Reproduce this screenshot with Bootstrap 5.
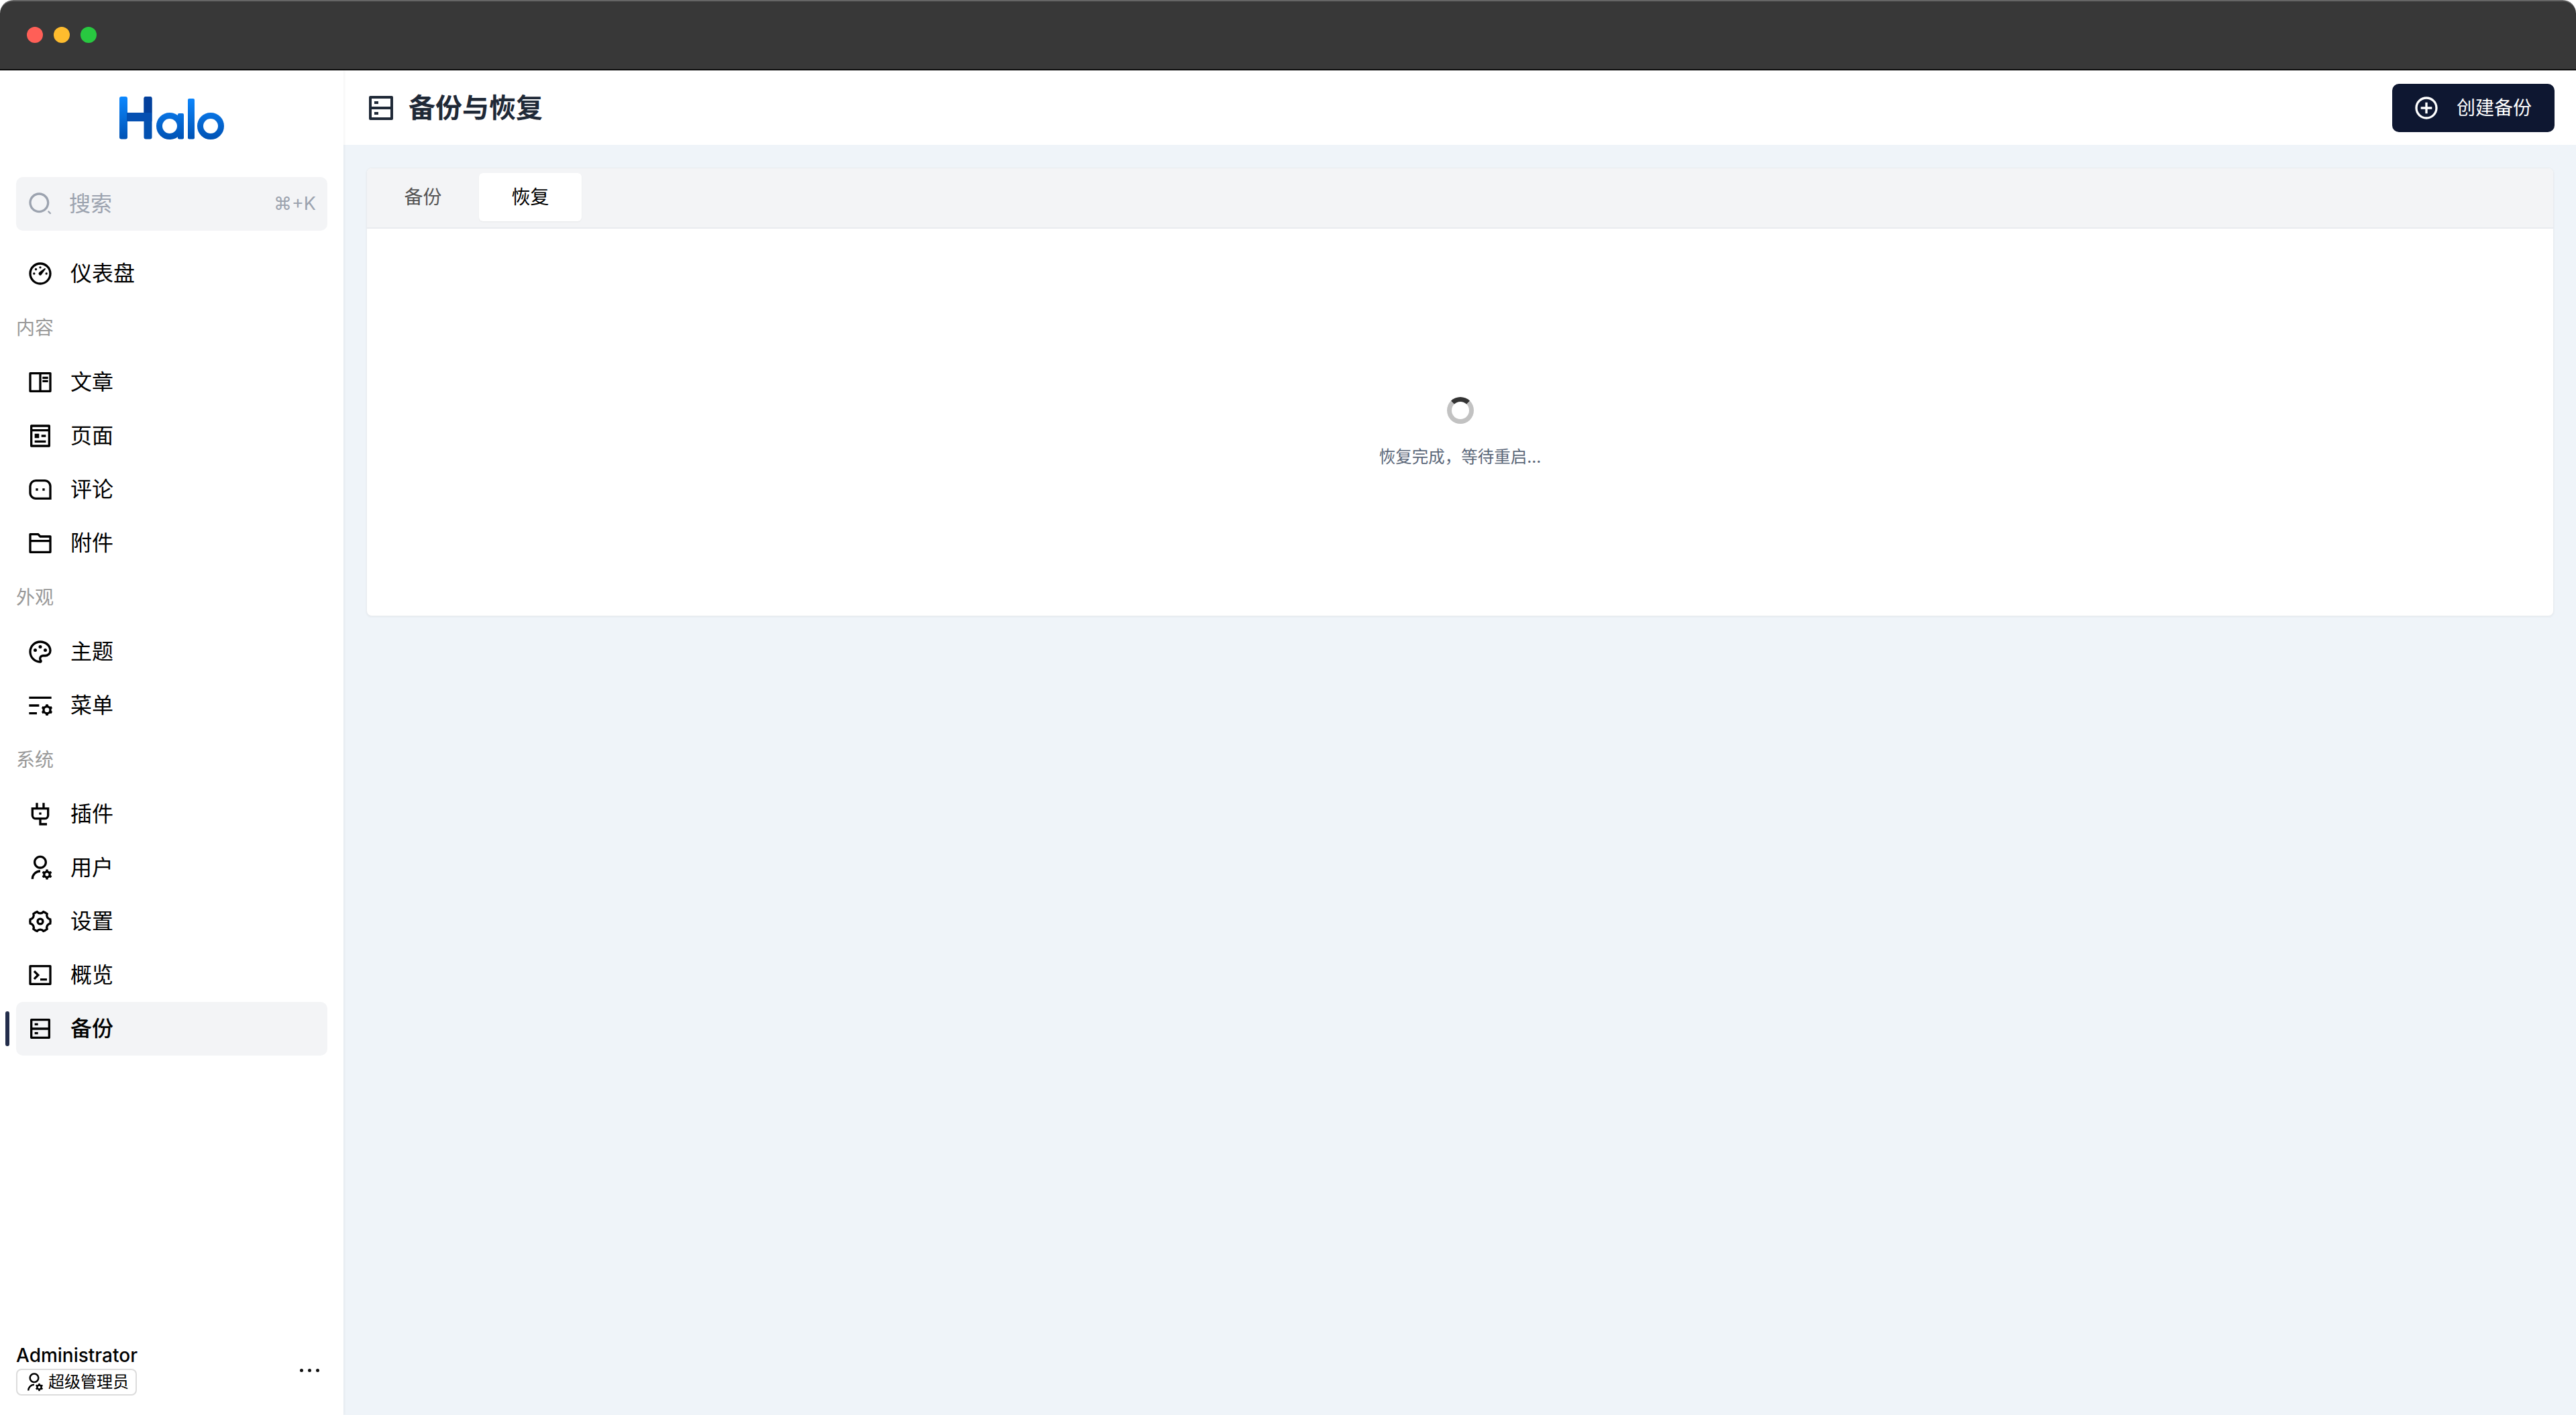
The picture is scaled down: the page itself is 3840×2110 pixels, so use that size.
<!DOCTYPE html>
<html lang="zh-CN">
<head>
<meta charset="utf-8">
<title>备份与恢复</title>
<link href="https://cdn.jsdelivr.net/npm/bootstrap@5.3.0/dist/css/bootstrap.min.css" rel="stylesheet">
<style>
html, body { height: 100%; }
body { font-family: "Inter", "Noto Sans CJK SC", sans-serif; background: #fff; color: #000; overflow: hidden; }
.hl-window { height: 100vh; }
.hl-titlebar { flex: 0 0 105px; background: #383838; border-top: 2px solid #666; border-bottom: 2px solid #0c0c0c; border-radius: 20px 20px 0 0; padding-left: 40px; gap: 16px; }
.hl-light { width: 24px; height: 24px; border-radius: 50%; margin-top: -2px; }
.hl-red { background: #ff5f57; }
.hl-yellow { background: #febc2e; }
.hl-green { background: #28c840; }
.hl-sidebar { flex: 0 0 512px; width: 512px; background: #fff; box-shadow: 1px 0 4px rgba(0,0,0,.06); z-index: 2; }
.hl-logo { padding-top: 37px; margin-bottom: 54px; line-height: 0; }
.hl-search { margin: 0 24px 24px; height: 80px; background: #f3f4f6; border-radius: 10px; padding: 0 17px 0 16px; color: #9ca3af; gap: 23px; }
.hl-search-text { font-size: 32px; }
.hl-kbd { font-size: 27px; font-family: "Inter", "DejaVu Sans", sans-serif; }
.hl-ico { width: 40px; height: 40px; flex: 0 0 40px; fill: currentColor; }
.hl-item { height: 80px; margin: 0 24px; padding: 0 16px; gap: 25px; border-radius: 10px; color: #000; font-size: 32px; text-decoration: none; position: relative; }
.hl-item:hover { color: #000; }
.hl-item-active { background: #f3f4f6; font-weight: 500; }
.hl-item-active::before { content: ""; position: absolute; left: -16px; top: 14px; width: 6px; height: 52px; border-radius: 3px; background: #232d4b; }
.hl-label { height: 82px; padding-left: 24px; font-size: 28px; color: #999; }
.hl-user { padding: 0 36px 28px 24px; }
.hl-name { font-size: 28px; font-weight: 500; line-height: 34px; margin-bottom: 3px; }
.hl-role { display: inline-flex; align-items: center; height: 40px; border: 2px solid #dcdcdc; border-radius: 8px; padding: 0 10px 0 10px; font-size: 24px; gap: 6px; line-height: 1; }
.hl-role .hl-ico { width: 30px; height: 30px; flex: 0 0 30px; }
.hl-dots { gap: 7px; margin-top: 0; }
.hl-dot { width: 5px; height: 5px; border-radius: 50%; background: #111; }
.hl-main { background: #eff4f9; min-width: 0; }
.hl-header { flex: 0 0 111px; background: #fff; padding: 0 32px; }
.hl-title { font-size: 40px; font-weight: 700; color: #1f2937; gap: 17px; margin: 0; line-height: 1; }
.hl-title .hl-ico { width: 48px; height: 48px; flex: 0 0 48px; }
.hl-create { height: 72px; width: 242px; background: #0e1731; border: 0; border-radius: 10px; color: #fff; font-size: 28px; gap: 25px; padding: 0 33px 0 31px; }
.hl-create:hover, .hl-create:active { background: #0e1731 !important; color: #fff !important; }
.hl-body { padding: 34px 33px 34px 34px; }
.hl-panel { height: 669px; border: 1px solid #e9ecf0; border-radius: 8px; box-shadow: 0 1px 3px rgba(0,0,0,.05); overflow: hidden; background: #fff; }
.hl-tabs { height: 90px; background: #f3f4f6; border-bottom: 2px solid #e9ebef; padding: 7px 7px; gap: 7px; }
.hl-tab { height: 72px; width: 153px; font-size: 28px; color: #555; border-radius: 6px; text-decoration: none; }
.hl-tab:hover { color: #555; }
.hl-tab-active, .hl-tab-active:hover { background: #fff; color: #000; box-shadow: 0 1px 2px rgba(0,0,0,.05); }
.hl-pane { flex: 1 1 auto; padding-top: 251px; }
.hl-loader { width: 40px; height: 40px; border: 7px solid #c2c2c2; border-top-color: #333; border-radius: 50%; }
.hl-wait { font-size: 24.5px; color: #5b6779; margin-top: 31px; line-height: 36px; }
</style>
</head>
<body>
<svg width="0" height="0" class="d-none" aria-hidden="true">
  <symbol id="i-dash" viewBox="0 0 24 24"><path d="M12 2c5.523 0 10 4.477 10 10s-4.477 10-10 10S2 17.523 2 12 6.477 2 12 2zm0 2a8 8 0 1 0 0 16 8 8 0 0 0 0-16zm3.833 3.337a.596.596 0 0 1 .763.067.59.59 0 0 1 .063.76c-2.18 3.046-3.38 4.678-3.598 4.897a1.5 1.5 0 0 1-2.122-2.122c.374-.373 2.005-1.574 4.894-3.602zM17.5 11a1 1 0 0 1 0 2 1 1 0 0 1 0-2zm-11 0a1 1 0 0 1 0 2 1 1 0 0 1 0-2zm2.318-3.596a1 1 0 0 1 0 1.414 1 1 0 0 1-1.414 0 1 1 0 0 1 0-1.414 1 1 0 0 1 1.414 0zM12 5.5a1 1 0 0 1 1 1 1 1 0 0 1-2 0 1 1 0 0 1 1-1z"/></symbol>
  <symbol id="i-book" viewBox="0 0 24 24"><path d="M2 3.993A1 1 0 0 1 2.992 3h18.016c.548 0 .992.445.992.993v16.014a1 1 0 0 1-.992.993H2.992A.993.993 0 0 1 2 20.007V3.993zM11 5H4v14h7V5zm2 0v14h7V5h-7zm1 2h5v2h-5V7zm0 3h5v2h-5v-2z"/></symbol>
  <symbol id="i-pages" viewBox="0 0 24 24"><path d="M5 8v12h14V8H5zm0-2h14V4H5v2zm15 16H4a1 1 0 0 1-1-1V3a1 1 0 0 1 1-1h16a1 1 0 0 1 1 1v18a1 1 0 0 1-1 1zM7 10h4v4H7v-4zm0 6h10v2H7v-2zm6-5h4v2h-4v-2z"/></symbol>
  <symbol id="i-msg" viewBox="0 0 24 24"><path d="M2 8.994A5.99 5.99 0 0 1 8 3h8c3.313 0 6 2.695 6 5.994V21H8c-3.313 0-6-2.695-6-5.994V8.994zM20 19V8.994A4.004 4.004 0 0 0 16 5H8a3.99 3.99 0 0 0-4 3.994v6.012A4.004 4.004 0 0 0 8 19h12zm-6-8h2v2h-2v-2zm-6 0h2v2H8v-2z"/></symbol>
  <symbol id="i-folder" viewBox="0 0 24 24"><path d="M12.414 5H21a1 1 0 0 1 1 1v14a1 1 0 0 1-1 1H3a1 1 0 0 1-1-1V4a1 1 0 0 1 1-1h7.414l2 2zM20 11H4v8h16v-8zm0-2V7h-8.414l-2-2H4v4h16z"/></symbol>
  <symbol id="i-palette" viewBox="0 0 24 24"><path d="M12 2c5.522 0 10 3.978 10 8.889a5.558 5.558 0 0 1-5.556 5.555h-1.966c-.922 0-1.667.745-1.667 1.667 0 .422.167.811.422 1.1.267.3.434.689.434 1.122C13.667 21.256 12.9 22 12 22 6.478 22 2 17.522 2 12S6.478 2 12 2zm-1.189 16.111a3.664 3.664 0 0 1 3.667-3.667h1.966A3.558 3.558 0 0 0 20 10.89C20 7.139 16.468 4 12 4a8 8 0 0 0-.676 15.972 3.648 3.648 0 0 1-.513-1.86zM7.5 12a1.5 1.5 0 1 1 0-3 1.5 1.5 0 0 1 0 3zm9 0a1.5 1.5 0 1 1 0-3 1.5 1.5 0 0 1 0 3zM12 9a1.5 1.5 0 1 1 0-3 1.5 1.5 0 0 1 0 3z"/></symbol>
  <symbol id="i-list" viewBox="0 0 24 24"><path d="M2 18h7v2H2v-2zm0-7h9v2H2v-2zm0-7h20v2H2V4zm18.674 9.025l1.156-.391 1 1.732-.916.805a4.017 4.017 0 0 1 0 1.658l.916.805-1 1.732-1.156-.391c-.41.37-.898.655-1.435.83L19 21h-2l-.24-1.196a3.996 3.996 0 0 1-1.434-.83l-1.156.392-1-1.732.916-.805a4.017 4.017 0 0 1 0-1.658l-.916-.805 1-1.732 1.156.391c.41-.37.898-.655 1.435-.83L17 11h2l.24 1.196c.536.174 1.024.46 1.434.83zM18 18a2 2 0 1 0 0-4 2 2 0 0 0 0 4z"/></symbol>
  <symbol id="i-plug" viewBox="0 0 24 24"><path d="M4 6h4V2h2v4h4V2h2v4h4v7a4 4 0 0 1-4 4h-3v3h5v2h-7v-5H8a4 4 0 0 1-4-4zM6 8v5a2 2 0 0 0 2 2h8a2 2 0 0 0 2-2V8zM11 10.5h2v2h-2z"/></symbol>
  <symbol id="i-user" viewBox="0 0 24 24"><path d="M12 14v2a6 6 0 0 0-6 6H4a8 8 0 0 1 8-8zm0-1c-3.315 0-6-2.685-6-6s2.685-6 6-6 6 2.685 6 6-2.685 6-6 6zm0-2c2.21 0 4-1.79 4-4s-1.79-4-4-4-4 1.79-4 4 1.79 4 4 4zm2.595 7.812a3.51 3.51 0 0 1 0-1.623l-.992-.573 1-1.732.992.573A3.496 3.496 0 0 1 17 14.645V13.5h2v1.145c.532.158 1.012.44 1.405.812l.992-.573 1 1.732-.992.573a3.51 3.51 0 0 1 0 1.622l.992.573-1 1.732-.992-.573a3.496 3.496 0 0 1-1.405.812V22.5h-2v-1.145a3.496 3.496 0 0 1-1.405-.812l-.992.573-1-1.732.992-.572zM18 19.5a1.5 1.5 0 1 0 0-3 1.5 1.5 0 0 0 0 3z"/></symbol>
  <symbol id="i-gear" viewBox="0 0 24 24"><g transform="translate(12 12) scale(.91) translate(-12 -12)" fill="none" stroke="currentColor" stroke-width="2.2"><path d="M5.334 4.545a9.99 9.99 0 0 1 3.542-2.048A3.993 3.993 0 0 0 12 3.999a3.993 3.993 0 0 0 3.124-1.502 9.99 9.99 0 0 1 3.542 2.048 3.993 3.993 0 0 0 .262 3.454 3.993 3.993 0 0 0 2.863 1.955 10.043 10.043 0 0 1 0 4.09c-1.16.178-2.23.86-2.863 1.955a3.993 3.993 0 0 0-.262 3.455 9.99 9.99 0 0 1-3.542 2.047A3.993 3.993 0 0 0 12 20a3.993 3.993 0 0 0-3.124 1.502 9.99 9.99 0 0 1-3.542-2.047 3.993 3.993 0 0 0-.262-3.455 3.993 3.993 0 0 0-2.863-1.954 10.043 10.043 0 0 1 0-4.091 3.993 3.993 0 0 0 2.863-1.955 3.993 3.993 0 0 0 .262-3.454z"/><circle cx="12" cy="12" r="2.6"/></g></symbol>
  <symbol id="i-term" viewBox="0 0 24 24"><path d="M3 3h18a1 1 0 0 1 1 1v16a1 1 0 0 1-1 1H3a1 1 0 0 1-1-1V4a1 1 0 0 1 1-1zm1 2v14h16V5H4zm8 10h6v2h-6v-2zm-3.333-3L5.838 9.172l1.415-1.415L11.495 12l-4.242 4.243-1.415-1.415L8.667 12z"/></symbol>
  <symbol id="i-server" viewBox="0 0 24 24"><path d="M5 11h14V5H5v6zm16-7v16a1 1 0 0 1-1 1H4a1 1 0 0 1-1-1V4a1 1 0 0 1 1-1h16a1 1 0 0 1 1 1zm-2 9H5v6h14v-6zM7 15h3v2H7v-2zm0-8h3v2H7V7z"/></symbol>
  <symbol id="i-add" viewBox="0 0 24 24"><path d="M11 11V7h2v4h4v2h-4v4h-2v-4H7v-2h4zm1 11C6.477 22 2 17.523 2 12S6.477 2 12 2s10 4.477 10 10-4.477 10-10 10zm0-2a8 8 0 1 0 0-16 8 8 0 0 0 0 16z"/></symbol>
  <symbol id="i-search" viewBox="0 0 24 24"><path d="M11 2c4.968 0 9 4.032 9 9s-4.032 9-9 9-9-4.032-9-9 4.032-9 9-9zm0 16c3.867 0 7-3.133 7-7 0-3.868-3.133-7-7-7-3.868 0-7 3.132-7 7 0 3.867 3.132 7 7 7zm8.485.071l2.329 2.328-.915.915-2.328-2.329.914-.914z"/></symbol>
</svg>

<div class="hl-window d-flex flex-column">
  <div class="hl-titlebar d-flex align-items-center">
    <span class="hl-light hl-red"></span>
    <span class="hl-light hl-yellow"></span>
    <span class="hl-light hl-green"></span>
  </div>
  <div class="d-flex flex-grow-1" style="min-height:0">
    <aside class="hl-sidebar d-flex flex-column">
      <div class="hl-logo d-flex justify-content-center">
        <svg width="160" height="68" viewBox="176 142 160 68" role="img" aria-label="Halo">
          <defs>
            <linearGradient id="lg" gradientUnits="userSpaceOnUse" x1="0" y1="144" x2="0" y2="208"><stop offset="0" stop-color="#0d88ff"/><stop offset="1" stop-color="#0052b4"/></linearGradient>
          </defs>
          <rect x="178" y="144" width="12" height="63.5" rx="3" fill="url(#lg)"/>
          <rect x="214.5" y="144" width="12" height="63.5" rx="3" fill="#0351b0"/>
          <rect x="214.5" y="144" width="12" height="26" rx="3" fill="#03409c"/>
          <rect x="189" y="168" width="37.5" height="13" fill="#0550b2"/>
          <circle cx="253" cy="188" r="15.5" fill="none" stroke="url(#lg)" stroke-width="9"/>
          <rect x="265" y="169" width="9" height="38.5" rx="2" fill="url(#lg)"/>
          <rect x="280" y="147" width="10" height="60.5" rx="2" fill="url(#lg)"/>
          <circle cx="314" cy="188" r="15.5" fill="none" stroke="url(#lg)" stroke-width="9"/>
        </svg>
      </div>
      <div class="hl-search d-flex align-items-center">
        <svg class="hl-ico"><use href="#i-search"/></svg>
        <span class="hl-search-text flex-grow-1">搜索</span>
        <span class="hl-kbd">⌘+K</span>
      </div>
      <nav class="d-flex flex-column">
        <a class="hl-item d-flex align-items-center" href="#"><svg class="hl-ico"><use href="#i-dash"/></svg>仪表盘</a>
        <div class="hl-label d-flex align-items-center">内容</div>
        <a class="hl-item d-flex align-items-center" href="#"><svg class="hl-ico"><use href="#i-book"/></svg>文章</a>
        <a class="hl-item d-flex align-items-center" href="#"><svg class="hl-ico"><use href="#i-pages"/></svg>页面</a>
        <a class="hl-item d-flex align-items-center" href="#"><svg class="hl-ico"><use href="#i-msg"/></svg>评论</a>
        <a class="hl-item d-flex align-items-center" href="#"><svg class="hl-ico"><use href="#i-folder"/></svg>附件</a>
        <div class="hl-label d-flex align-items-center">外观</div>
        <a class="hl-item d-flex align-items-center" href="#"><svg class="hl-ico"><use href="#i-palette"/></svg>主题</a>
        <a class="hl-item d-flex align-items-center" href="#"><svg class="hl-ico"><use href="#i-list"/></svg>菜单</a>
        <div class="hl-label d-flex align-items-center">系统</div>
        <a class="hl-item d-flex align-items-center" href="#"><svg class="hl-ico"><use href="#i-plug"/></svg>插件</a>
        <a class="hl-item d-flex align-items-center" href="#"><svg class="hl-ico"><use href="#i-user"/></svg>用户</a>
        <a class="hl-item d-flex align-items-center" href="#"><svg class="hl-ico"><use href="#i-gear"/></svg>设置</a>
        <a class="hl-item d-flex align-items-center" href="#"><svg class="hl-ico"><use href="#i-term"/></svg>概览</a>
        <a class="hl-item hl-item-active d-flex align-items-center" href="#"><svg class="hl-ico"><use href="#i-server"/></svg>备份</a>
      </nav>
      <div class="hl-user mt-auto d-flex justify-content-between align-items-center">
        <div>
          <div class="hl-name">Administrator</div>
          <div class="hl-role"><svg class="hl-ico"><use href="#i-user"/></svg>超级管理员</div>
        </div>
        <div class="hl-dots d-flex"><span class="hl-dot"></span><span class="hl-dot"></span><span class="hl-dot"></span></div>
      </div>
    </aside>
    <main class="hl-main d-flex flex-column flex-grow-1">
      <header class="hl-header d-flex align-items-center justify-content-between">
        <h1 class="hl-title d-flex align-items-center"><svg class="hl-ico"><use href="#i-server"/></svg>备份与恢复</h1>
        <button type="button" class="btn hl-create d-flex align-items-center"><svg class="hl-ico"><use href="#i-add"/></svg>创建备份</button>
      </header>
      <div class="hl-body">
        <section class="hl-panel d-flex flex-column">
          <div class="hl-tabs d-flex">
            <a class="hl-tab d-flex align-items-center justify-content-center" href="#">备份</a>
            <a class="hl-tab hl-tab-active d-flex align-items-center justify-content-center" href="#">恢复</a>
          </div>
          <div class="hl-pane d-flex flex-column align-items-center">
            <div class="hl-loader"></div>
            <div class="hl-wait">恢复完成，等待重启...</div>
          </div>
        </section>
      </div>
    </main>
  </div>
</div>
<script src="https://cdn.jsdelivr.net/npm/bootstrap@5.3.0/dist/js/bootstrap.bundle.min.js"></script>
</body>
</html>
